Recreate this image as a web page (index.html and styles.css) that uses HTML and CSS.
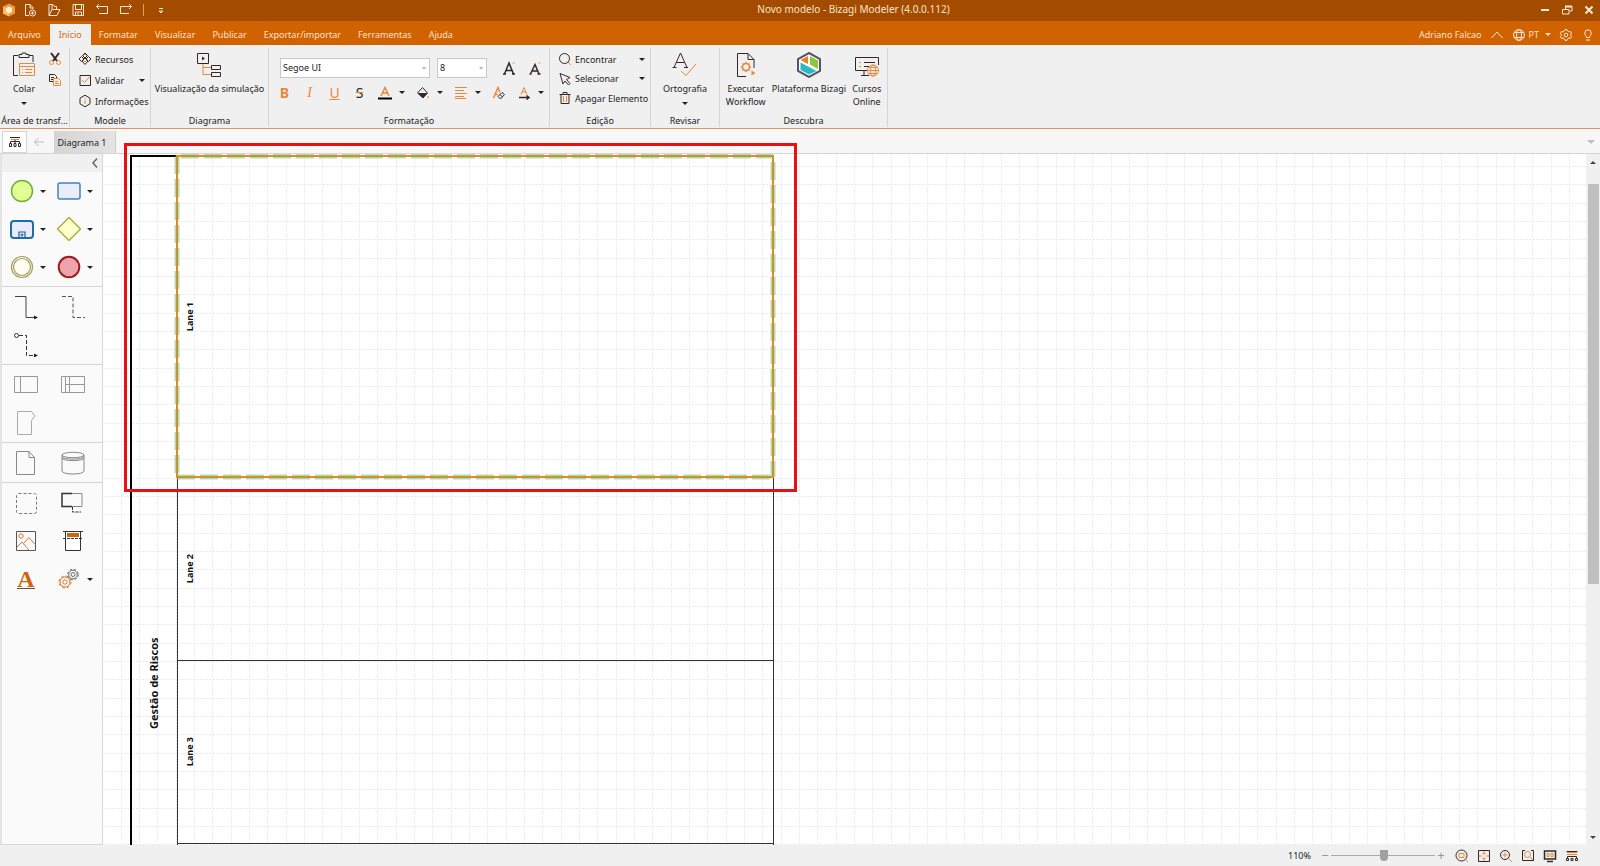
FILE: index.html
```
<!DOCTYPE html>
<html lang="pt">
<head>
  <meta charset="UTF-8" />
  <meta name="viewport" content="width=device-width, initial-scale=1.0"/>
  <title>Novo modelo - Bizagi Modeler (4.0.0.112)</title>
  <link rel="stylesheet" href="styles.css">
</head>
<body>
  <header class="title-bar">
    <div class="quick-access">
      <svg class="logo" width="14" height="14" viewBox="0 0 14 14"><path d="M7 0.5l6 3v7l-6 3-6-3v-7z" fill="#f59a3c"/><path d="M1 3.500l6 3.200v6.800l-6-3z" fill="#fbb569"/><path d="M7 3.500l3 1.600v4L7 10.600 4 9.100v-4z" fill="#fff2dd"/></svg>
      <button title="Novo"><svg width="14" height="14" viewBox="0 0 14 14"><path d="M6 12.500H2.500V1.500H7l3 3V6M7 1.500V5h3"/><circle cx="9.500" cy="10" r="3"/><path d="M9.500 8.500v3M8 10h3"/></svg></button>
      <button title="Abrir"><svg width="14" height="14" viewBox="0 0 14 14"><path d="M2 12.500V1.500h4l1.500 2h2V6M2 12.500L5 6.500h8l-3 6zM5 1.500v5"/></svg></button>
      <button title="Salvar"><svg width="14" height="14" viewBox="0 0 14 14"><path d="M2 1.500h10.500v11H2zM4.500 1.500v5h6v-5M4.500 12.500V9h6v3.500M7 10v2.500"/></svg></button>
      <button title="Desfazer"><svg width="14" height="14" viewBox="0 0 14 14"><path d="M4 1L1.500 3.500 4 6M1.500 3.500H12.500v7H4"/></svg></button>
      <button title="Refazer"><svg width="14" height="14" viewBox="0 0 14 14"><path d="M10 1l2.500 2.500L10 6M12.500 3.500H1.500v7H10"/></svg></button>
      <span class="divider"></span>
      <button title="Personalizar"><svg width="14" height="14" viewBox="0 0 14 14"><path d="M5 5.500h4M5.200 8h3.600L7 10z"/></svg></button>
    </div>
    <h1>Novo modelo - Bizagi Modeler (4.0.0.112)</h1>
    <div class="window-buttons">
      <button title="Minimizar"><svg width="12" height="12" viewBox="0 0 12 12"><path d="M2 6h8" stroke-width="2"/></svg></button>
      <button title="Restaurar"><svg width="12" height="12" viewBox="0 0 12 12"><path d="M4.500 5V2.500H11V7H8.500M1.500 5.500H8V10H1.500z"/><path d="M4 2.500h7" stroke-width="2"/></svg></button>
      <button title="Fechar"><svg width="12" height="12" viewBox="0 0 12 12"><path d="M2.500 2.500l7 7M9.500 2.500l-7 7" stroke-width="2"/></svg></button>
    </div>
  </header>

  <nav class="menu-bar">
    <button>Arquivo</button>
    <button class="active">Início</button>
    <button>Formatar</button>
    <button>Visualizar</button>
    <button>Publicar</button>
    <button>Exportar/importar</button>
    <button>Ferramentas</button>
    <button>Ajuda</button>
    <div class="account">
      <span>Adriano Falcao</span>
      <button title="Recolher"><svg width="14" height="12" viewBox="0 0 14 12"><path d="M1.500 9L7 3l5.500 6"/></svg></button>
      <button class="language"><svg width="14" height="12" viewBox="0 0 14 12"><circle cx="7" cy="6" r="5.400"/><ellipse cx="7" cy="6" rx="2.500" ry="5.400"/><path d="M2 3.500h10M2 8.500h10"/></svg>PT<i class="caret"></i></button>
      <button title="Opções"><svg width="14" height="12" viewBox="0 0 14 12"><path d="M5.500 2L6 .6h2L8.500 2l1.500.9 1.600-.4 1 1.700L11.500 6l1.100 1.500-1 1.700L10 9l-1.500 1-.5 1.400H6L5.500 10 4 9l-1.600.3-1-1.700L2.500 6 1.400 4.200l1-1.700L4 2.900z"/><circle cx="7" cy="6" r="1.800"/></svg></button>
      <button title="Dicas"><svg width="14" height="12" viewBox="0 0 14 12"><path d="M5.500 8.500C5.500 7 3.800 6.500 3.800 4a3.200 3.200 0 0 1 6.400 0c0 2.500-1.700 3-1.700 4.500zM5 11h4"/></svg></button>
    </div>
  </nav>

  <section class="ribbon">
    <div class="group group-clipboard">
      <div class="group-body">
        <button class="big">
          <svg width="26" height="26" viewBox="0 0 26 26"><path class="dark" d="M7 3.500H2.500v20H7M18 3.500h4V10M8 5.500V2.500h3V1h4v1.500h3v3z"/><path class="orange" d="M8.500 11.500h15v12h-15zM8.500 14.500h15M11 17.500h1M14 17.500h7M11 20.500h1M14 20.500h7"/></svg>
          Colar
          <i class="caret"></i>
        </button>
        <div class="stack">
          <button title="Recortar"><svg width="14" height="14" viewBox="0 0 14 14"><path class="dark" d="M3 1l6 8M11 1L5 9" stroke-width="2"/><circle class="orange" cx="3.500" cy="10.500" r="2"/><circle class="orange" cx="10.500" cy="10.500" r="2"/></svg></button>
          <button title="Copiar"><svg width="14" height="14" viewBox="0 0 14 14"><path class="dark" d="M5 8.500H1.500v-7h5l2 2V5M3 4.500h3M3 6.500h2"/><path class="orange" d="M5.500 5.500h5l2 2v5h-7zM7 8.500h3M7 10.500h4"/></svg></button>
        </div>
      </div>
      <h2>Área de transf...</h2>
    </div>

    <div class="group group-model">
      <div class="group-body rows">
        <button class="row"><svg width="14" height="14" viewBox="0 0 14 14"><path class="dark" d="M7 1l2.500 2.500L7 6 4.500 3.500zM3.500 4.500L6 7 3.500 9.500 1 7zM10.500 4.500L13 7l-2.500 2.500L8 7zM7 6l3 3-3 3.500L4 9z"/><path class="orange" d="M5 4l2-2 2 2M4.500 7.500L7 10l2.500-2.500"/></svg>Recursos</button>
        <button class="row"><svg width="14" height="14" viewBox="0 0 14 14"><path class="dark" d="M2 2.500h10.500v10H2z"/><path class="orange" d="M4 7l2.500 2.500 5-5.500"/></svg>Validar<i class="caret"></i></button>
        <button class="row"><svg width="14" height="14" viewBox="0 0 14 14"><path class="dark" d="M7 1.200l5 3v5.600l-5 3-5-3V4.200z"/><path class="orange" d="M7 6v4M7 4v1"/></svg>Informações</button>
      </div>
      <h2>Modele</h2>
    </div>

    <div class="group group-diagram">
      <div class="group-body">
        <button class="big">
          <svg width="26" height="26" viewBox="0 0 26 26"><path class="dark" d="M1.500 1.500h11v10h-11zM15.500 13.500h9v4h-9zM15.500 20.500h9v4h-9z"/><path d="M6 4.500v4l3-2z" fill="#33272a"/><path class="orange" d="M7 12v10.500h8M7 15.500h8"/></svg>
          Visualização da simulação
        </button>
      </div>
      <h2>Diagrama</h2>
    </div>

    <div class="group group-format">
      <div class="group-body format-body">
        <div class="format-line">
          <span class="select-box font-name"><select aria-label="Fonte"><option>Segoe UI</option></select></span>
          <span class="select-box font-size"><select aria-label="Tamanho"><option>8</option></select></span>
          <button title="Aumentar fonte"><svg width="16" height="16" viewBox="0 0 16 16"><path class="dark thick" d="M2.500 14L7 3l4.500 11M4 10.500h6M1 14h3M10 14h3"/><path class="orange" d="M10.500 3.500l1-1 1 1"/></svg></button>
          <button title="Diminuir fonte"><svg width="16" height="16" viewBox="0 0 16 16"><path class="dark thick" d="M3.500 14L8 4.500 12 14M5.500 11h5M2.500 14h2M10.500 14h3"/><path class="orange" d="M11.500 2.500l1 1 1-1"/></svg></button>
        </div>
        <div class="format-line">
          <button class="letter bold">B</button>
          <button class="letter italic">I</button>
          <button class="letter underline">U</button>
          <button class="letter strike">S</button>
          <button class="drop" title="Cor da fonte"><svg width="14" height="14" viewBox="0 0 14 14"><path class="orange thick" d="M3 10L7 1.500 11 10M4.500 7h5"/><path d="M0 12.500h14" stroke="#000" stroke-width="2"/></svg><i class="caret"></i></button>
          <button class="drop" title="Preenchimento"><svg width="14" height="14" viewBox="0 0 14 14"><path class="dark" d="M6.500 1.500l5 5.500L7 12 1.500 7z"/><path d="M1.500 7h10L7 12z" fill="#33272a"/><path class="orange" d="M12 10v2.500"/></svg><i class="caret"></i></button>
          <button class="drop" title="Alinhamento"><svg width="14" height="14" viewBox="0 0 14 14"><path class="orange" d="M1 1.500h12M1 4.500h9M1 7.500h12M1 10.500h9M1 12.500h11"/></svg><i class="caret"></i></button>
          <button title="Limpar formatação"><svg width="14" height="14" viewBox="0 0 14 14"><path class="orange thick" d="M1.500 12L6 1.500l2 5M3.500 8.500H6"/><path class="dark" d="M6 10.500l4-4 2.500 2-4 4.500zM8 8.500l2.500 2.500"/></svg></button>
          <button class="drop" title="Direção do texto"><svg width="14" height="14" viewBox="0 0 14 14"><path class="orange" d="M4 8.500l3-7 3 7M5 6h4"/><path class="dark thick" d="M2 11.500h9M9.500 9.500l2.500 2-2.500 2"/></svg><i class="caret"></i></button>
        </div>
      </div>
      <h2>Formatação</h2>
    </div>

    <div class="group group-edit">
      <div class="group-body rows">
        <button class="row"><svg width="14" height="14" viewBox="0 0 14 14"><circle class="dark" cx="6.500" cy="6.500" r="5"/><path class="orange" d="M10 10l3 3"/></svg>Encontrar<i class="caret"></i></button>
        <button class="row"><svg width="14" height="14" viewBox="0 0 14 14"><path class="dark" d="M2 1.500l10 4-3.500 2 3.500 4-1.500 1.500L7 9l-2 3z"/></svg>Selecionar<i class="caret"></i></button>
        <button class="row"><svg width="14" height="14" viewBox="0 0 14 14"><path class="dark" d="M1.500 3.500h11M5 3V1.500h4V3M3 4v8.500h8V4"/><path class="orange" d="M5.500 5v6M8.500 5v6"/></svg>Apagar Elemento</button>
      </div>
      <h2>Edição</h2>
    </div>

    <div class="group group-review">
      <div class="group-body">
        <button class="big">
          <svg width="26" height="26" viewBox="0 0 26 26"><path class="dark" d="M2 15.500L8.500 1 15 15.500M4.500 10.500h8M0.500 15.500h4M12 15.500h4"/><path class="orange" d="M9 19l5 4.500L24 12"/></svg>
          Ortografia
          <i class="caret"></i>
        </button>
      </div>
      <h2>Revisar</h2>
    </div>

    <div class="group group-discover">
      <div class="group-body">
        <button class="big">
          <svg width="26" height="26" viewBox="0 0 26 26"><path class="dark" d="M13 24.500H4.500v-23H15l6 6V16M15 1.500v6h6"/><circle class="orange thick" cx="13" cy="15" r="3.500"/><path class="orange thick" d="M13 10v2M13 18v2M8 15h2M16 15h2M9.500 11.500l1.200 1.200M15.300 17.300l1.200 1.200M16.500 11.500l-1.200 1.200M9.500 18.500l1.200-1.200"/><path d="M18.500 18.500v5l4-2.500z" fill="#e8883a"/></svg>
          <span>Executar<br>Workflow</span>
        </button>
        <button class="big">
          <svg width="26" height="26" viewBox="0 0 26 26"><path d="M13 1l11 6v12l-11 6-11-6V7z" fill="#fff" stroke="#556" stroke-width="2"/><path d="M12 4v8L4.500 8z" fill="#ee7f1a"/><path d="M14 4l8 4.500v8.500l-8-4.500z" fill="#8cc63e"/><path d="M4.500 10.500L20.500 19 13 22.500 4.500 18z" fill="#29b9c0"/></svg>
          Plataforma Bizagi
        </button>
        <button class="big">
          <svg width="26" height="26" viewBox="0 0 26 26"><path class="dark" d="M13 18.500H1.500v-13h23V13M7 23.500h8M10 19v4M10 10.500h11M10 14.500h5"/><path class="orange" d="M5 10.500h2M5 14.500h2"/><circle class="orange" cx="19" cy="18.500" r="5.500"/><ellipse class="orange" cx="19" cy="18.500" rx="2.500" ry="5.500"/><path class="orange" d="M13.500 18.500h11M14.500 15.500h9M14.500 21.500h9"/></svg>
          <span>Cursos<br>Online</span>
        </button>
      </div>
      <h2>Descubra</h2>
    </div>
  </section>

  <main class="workspace">
    <div class="tab-strip">
      <button class="tree-btn" title="Diagramas"><svg width="14" height="12" viewBox="0 0 14 12"><path class="dark" d="M2 1.500h10M1.500 7.500h2v3h-2zM6 7.500h2v3H6zM10.500 7.500h2v3h-2z"/><path class="orange" d="M3 3.500h8"/><path class="dark" d="M2.500 7V5.500h9V7M7 4v3"/></svg></button>
      <button class="back-btn" title="Voltar"><svg width="12" height="12" viewBox="0 0 12 12"><path d="M11 6H1.500M5.500 2l-4 4 4 4" stroke="#bbb"/></svg></button>
      <button class="diagram-tab">Diagrama 1</button>
      <i class="caret strip-caret"></i>
    </div>

    <div class="editor">
      <aside class="palette">
        <div class="palette-head"><button title="Recolher"><svg width="8" height="12" viewBox="0 0 8 12"><path d="M6 1.500L2 6l4 4.500" stroke="#666" stroke-width="1.500"/></svg></button></div>
        <div class="tools">
          <button class="with-caret"><svg width="24" height="24" viewBox="0 0 24 24"><circle cx="12" cy="12" r="10.500" fill="#e2ff96" stroke="#6fb03a" stroke-width="1.500"/></svg><i class="caret"></i></button>
          <button class="with-caret"><svg width="24" height="24" viewBox="0 0 24 24"><rect x="1" y="4" width="22" height="16" rx="2" fill="#eaecfd" stroke="#3f85b0" stroke-width="1.500"/></svg><i class="caret"></i></button>
          <button class="with-caret"><svg width="24" height="24" viewBox="0 0 24 24"><rect x="1" y="4" width="22" height="17" rx="3" fill="#eaecfd" stroke="#1c6ea8" stroke-width="2"/><path d="M9 20.500v-5.500h6v5.500M10.500 18h3M12 16.500v3" stroke="#1c5f95" stroke-width="1.200"/></svg><i class="caret"></i></button>
          <button class="with-caret"><svg width="24" height="24" viewBox="0 0 24 24"><path d="M12 0.500L23.500 12 12 23.500 0.500 12z" fill="#ffffcc" stroke="#aab042" stroke-width="1.500"/></svg><i class="caret"></i></button>
          <button class="with-caret"><svg width="24" height="24" viewBox="0 0 24 24"><circle cx="12" cy="12" r="10.500" fill="#fffdf0" stroke="#a59d5c" stroke-width="1.200"/><circle cx="12" cy="12" r="8.500" fill="#fffdf0" stroke="#a59d5c" stroke-width="1.200"/></svg><i class="caret"></i></button>
          <button class="with-caret"><svg width="24" height="24" viewBox="0 0 24 24"><circle cx="12" cy="12" r="10.300" fill="#eca5aa" stroke="#9c1c22" stroke-width="2"/></svg><i class="caret"></i></button>
        </div>
        <div class="tools">
          <button><svg width="24" height="24" viewBox="0 0 24 24"><path d="M1 1.500h11v21h10" stroke="#444"/><path d="M20 20.500l4 2-4 2z" fill="#222"/></svg></button>
          <button><svg width="24" height="24" viewBox="0 0 24 24"><path d="M1 1.500h11v21h12" stroke="#555" stroke-dasharray="4 2"/></svg></button>
          <button><svg width="24" height="24" viewBox="0 0 24 24"><circle cx="2.500" cy="2.500" r="2" stroke="#333"/><path d="M5 2.500h7.500v20H22" stroke="#333" stroke-dasharray="4 2"/><path d="M20 20.500l4 2-4 2z" fill="#222"/></svg></button>
        </div>
        <div class="tools">
          <button><svg width="24" height="24" viewBox="0 0 24 24"><path d="M.5 3.500h23v16H.5zM6.500 3.500v16" stroke="#999"/></svg></button>
          <button><svg width="24" height="24" viewBox="0 0 24 24"><path d="M.5 3.500h23v16H.5zM4.500 3.500v16M8.500 3.500v16M4.500 11.500h19" stroke="#999"/></svg></button>
          <button><svg width="24" height="24" viewBox="0 0 24 24"><path d="M3.500.5h14l3.500 4.500-3.500 4.500v14h-14z" stroke="#aaa"/></svg></button>
        </div>
        <div class="tools">
          <button><svg width="24" height="24" viewBox="0 0 24 24"><path d="M2.500.5H15l5.500 6v17h-18zM15 .5v6h5.500" stroke="#888"/></svg></button>
          <button><svg width="24" height="24" viewBox="0 0 24 24"><path d="M1 4v16c0 4 22 4 22 0V4M1 7c0 3.500 22 3.500 22 0M1 5.500c0 3.500 22 3.500 22 0" stroke="#888"/><ellipse cx="12" cy="4" rx="11" ry="2.700" stroke="#888"/></svg></button>
        </div>
        <div class="tools">
          <button><svg width="24" height="24" viewBox="0 0 24 24"><rect x="2.500" y="2.500" width="20" height="20" rx="2" stroke="#777" stroke-dasharray="3 2"/></svg></button>
          <button><svg width="24" height="24" viewBox="0 0 24 24"><path d="M11 2.500h10v13H11" stroke="#888"/><path d="M11 2.500H1v13h10" stroke="#333" stroke-width="1.500"/><path d="M11.500 16v5H20" stroke="#333" stroke-dasharray="3 1"/></svg></button>
          <button><svg width="24" height="24" viewBox="0 0 24 24"><path d="M2.500 2.500h19v19h-19z" stroke="#555"/><circle cx="7" cy="7" r="2.200" stroke="#d9762b"/><path d="M3 18l5-5 4.500 5.500M9.500 14.500L15 8.500l6 7M12.500 18.500l3 3" stroke="#d9762b"/></svg></button>
          <button><svg width="24" height="24" viewBox="0 0 24 24"><path d="M4.500 2.500h15v19h-15z" fill="#fff" stroke="#333"/><path d="M6 4h12v4H6z" fill="#cc6612"/><path d="M2 2.500h3M19 2.500h3M2 9.500h20" stroke="#333" stroke-dasharray="3 1"/></svg></button>
          <button class="text-tool">A</button>
          <button class="with-caret"><svg width="24" height="24" viewBox="0 0 24 24"><g stroke="#666"><circle cx="16" cy="7.500" r="4.300"/><circle cx="16" cy="7.500" r="5.300" stroke-dasharray="2.200 2"/><circle cx="16" cy="7.500" r="2"/></g><g stroke="#d9762b"><circle cx="8" cy="15" r="5" fill="#fafafa"/><circle cx="8" cy="15" r="6" stroke-dasharray="2.500 2.200"/><circle cx="8" cy="15" r="2.200"/></g></svg><i class="caret"></i></button>
        </div>
      </aside>

      <div class="canvas">
        <svg class="grid" width="100%" height="100%">
          <defs>
            <!-- three cells of the grid at 110% zoom -->
            <pattern id="gridCells" x="0" y="12" width="55" height="55" patternUnits="userSpaceOnUse">
              <path d="M18.500 0v55M36.500 0v55M54.500 0v55M0 .5h55M0 18.500h55M0 37.500h55" stroke="#ececec" stroke-dasharray="2 1"/>
            </pattern>
          </defs>
          <rect width="100%" height="100%" fill="url(#gridCells)"/>
        </svg>
        <div class="pool">
          <div class="pool-name">Gestão de Riscos</div>
          <div class="lanes">
            <div class="lane lane-tall"><span>Lane 1</span></div>
            <div class="lane"><span>Lane 2</span></div>
            <div class="lane"><span>Lane 3</span></div>
            <div class="lane"></div>
            <div class="lane"></div>
            <svg class="selection" width="602" height="327" viewBox="0 0 602 327">
              <rect x="3" y="3" width="596" height="321" stroke="#e8862a" stroke-width="2"/>
              <g stroke="#86b04a" stroke-opacity=".5" stroke-width="5" stroke-dasharray="18 5">
                <path d="M7 3h592M3 3v321M3 324h596M599 9v315"/>
              </g>
            </svg>
          </div>
        </div>
      </div>

      <div class="scrollbar">
        <i class="caret up"></i>
        <div class="scroll-thumb"></div>
        <i class="caret"></i>
      </div>
    </div>
    <div class="highlight"></div>
  </main>

  <footer class="status-bar">
    <label for="zoomRange">110%</label>
    <div class="zoom-control">
      <button title="Reduzir">−</button>
      <input type="range" id="zoomRange" min="10" max="210" value="112">
      <button title="Ampliar">+</button>
    </div>
    <div class="view-buttons">
      <button title="Zoom 100%"><svg width="14" height="14" viewBox="0 0 14 14"><circle class="dark" cx="6.500" cy="6.500" r="5.500"/><path class="orange" d="M4 4.500h5v4H4zM10.500 10.500L13 13"/></svg></button>
      <button title="Ajustar"><svg width="14" height="14" viewBox="0 0 14 14"><path class="dark" d="M1.500 1.500h11v11h-11z"/><path class="orange" d="M7 2v3M7 9v3M2 7h3M9 7h3M5.500 4L7 5.500 8.500 4M5.500 10L7 8.500 8.500 10"/></svg></button>
      <button title="Zoom"><svg width="14" height="14" viewBox="0 0 14 14"><circle class="dark" cx="6" cy="6" r="4.500"/><path class="orange" d="M6 3.500v5M3.500 6h5M9.500 9.500L13 13"/></svg></button>
      <button title="Zoom da seleção"><svg width="14" height="14" viewBox="0 0 14 14"><path class="dark" d="M4 1.500H1.500v10H12.500v-10H10"/><circle class="orange" cx="6.500" cy="5.500" r="3"/><path class="orange" d="M9 8l3 3"/></svg></button>
      <button title="Apresentação"><svg width="14" height="14" viewBox="0 0 14 14"><path class="dark thick" d="M1.500 2h11v8h-11zM4 12.500h6"/><path class="orange" d="M4 4.500h2v3H4zM8 4.500h2v3H8z"/></svg></button>
      <button title="Diagramas"><svg width="14" height="14" viewBox="0 0 14 14"><path class="orange" d="M2 3.500h10M2 5.500h10"/><path class="dark" d="M1.500 2.500h11M1.500 9.500h2v2h-2zM6 9.500h2v2H6zM10.500 9.500h2v2h-2zM2.500 9V7.500h9V9"/></svg></button>
    </div>
  </footer>
</body>
</html>
```
FILE: styles.css
```
* {
  box-sizing: border-box;
}

body {
  margin: 0;
  height: 100vh;
  display: flex;
  flex-direction: column;
  overflow: hidden;
  font-family: 'Segoe UI', 'Noto Sans', sans-serif;
  font-size: 9px;
  line-height: 13px;
  color: #222;
  background: #f0f0f0;
}

h1, h2 {
  margin: 0;
  font-weight: normal;
}

button {
  display: flex;
  align-items: center;
  justify-content: center;
  padding: 0;
  border: none;
  background: none;
  font: inherit;
  color: inherit;
  cursor: pointer;
}

svg {
  display: block;
  flex: none;
  fill: none;
}

.dark {
  stroke: #33272a;
}

.orange {
  stroke: #e8883a;
}

.thick {
  stroke-width: 1.5;
}

.caret {
  flex: none;
  border: 3px solid transparent;
  border-top-color: currentColor;
  border-bottom: none;
}

.caret.up {
  border-top: none;
  border-bottom: 3px solid currentColor;
}

/* title bar */
.title-bar {
  display: grid;
  grid-template-columns: 1fr auto 1fr;
  align-items: center;
  height: 21px;
  padding: 0 5px 2px 2px;
  background: #a34c00;
  color: #fde3cc;
}

.title-bar h1 {
  padding-left: 110px;
  font-size: 10px;
}

.title-bar svg,
.menu-bar svg {
  stroke: #fde8d6;
}

.title-bar .logo {
  stroke: none;
}

.quick-access,
.window-buttons {
  display: flex;
  align-items: center;
  gap: 10px;
}

.quick-access > .logo {
  margin-right: -3px;
}

.divider {
  width: 1px;
  height: 12px;
  background: #d9a06c;
}

.window-buttons {
  justify-content: flex-end;
}

/* menu */
.menu-bar {
  display: flex;
  align-items: flex-end;
  height: 24px;
  background: #d06200;
  color: #fde3cc;
}

.menu-bar > button {
  height: 21px;
  padding: 0 9px 0 8px;
}

.menu-bar > .active {
  padding: 0 9px;
  background: #f0f0f0;
  color: #d9691a;
}

.account {
  display: flex;
  align-items: center;
  gap: 8px;
  height: 21px;
  margin-left: auto;
  padding-right: 5px;
}

.language {
  gap: 3px;
}

.language .caret {
  margin-left: 3px;
}

/* ribbon */
.ribbon {
  display: flex;
  height: 84px;
  padding: 3px 0 1px;
  border-bottom: 1px solid #dc9560;
}

.group {
  display: flex;
  flex-direction: column;
  flex: none;
  border-right: 1px solid #d5d5d5;
}

.group h2 {
  font-size: 9px;
  text-align: center;
  white-space: nowrap;
}

.group-body {
  flex: 1;
  display: flex;
  justify-content: center;
  padding-top: 4px;
}

.group-clipboard { width: 70px; }
.group-model { width: 81px; }
.group-diagram { width: 118px; }
.group-format { width: 281px; }
.group-edit { width: 101px; }
.group-review { width: 69px; }
.group-discover { width: 168px; }

.big {
  flex-direction: column;
  justify-content: flex-start;
  gap: 4px;
  white-space: nowrap;
}

.big .caret {
  margin-top: 3px;
}

.group-clipboard .group-body {
  justify-content: flex-start;
  gap: 11px;
  padding-left: 11px;
}

.group-discover .group-body {
  gap: 6px;
}

.stack {
  display: flex;
  flex-direction: column;
  gap: 7px;
}

.rows {
  flex-direction: column;
  justify-content: space-between;
  padding: 4px 5px 6px 8px;
}

.group-edit .rows {
  padding-bottom: 9px;
}

.row {
  justify-content: flex-start;
  gap: 3px;
  white-space: nowrap;
}

.row .caret {
  margin-left: auto;
}

.format-body {
  flex-direction: column;
  justify-content: flex-start;
  gap: 6px;
  padding: 10px 0 0 3px;
}

.format-line {
  display: flex;
  align-items: center;
  height: 19px;
}

.format-line button {
  width: 25px;
  height: 19px;
}

.select-box {
  position: relative;
  height: 20px;
  margin: 0 0 0 8px;
}

.select-box::after {
  content: "";
  position: absolute;
  right: 4px;
  top: 9px;
  border: 2px solid transparent;
  border-top: 3px solid #b5b5b5;
  border-bottom: none;
}

.font-name {
  width: 150px;
}

.font-size {
  width: 50px;
  margin: 0 10px 0 7px;
}

.select-box select {
  appearance: none;
  width: 100%;
  height: 20px;
  padding: 0 2px;
  border: 1px solid #c8c8c8;
  border-radius: 0;
  background: #fff;
  font: inherit;
  color: #222;
}

.format-line .letter {
  font-size: 14px;
  color: #e8883a;
}

.format-line .bold { font-weight: bold; }
.format-line .italic { font-family: 'Liberation Serif', serif; font-style: italic; }
.format-line .underline { text-decoration: underline; }
.format-line .strike { color: #33272a; text-decoration: line-through #e8883a; }

.format-line .drop {
  width: 38px;
  gap: 7px;
}

/* workspace */
.workspace {
  position: relative;
  flex: 1;
  display: flex;
  flex-direction: column;
  min-height: 0;
}

.tab-strip {
  display: flex;
  align-items: stretch;
  height: 25px;
  padding: 2px 5px 0 2px;
  border-bottom: 1px solid #d5d5d5;
  background: #f7f7f7;
}

.tree-btn {
  width: 25px;
  border: 1px solid #d5d5d5;
  background: #fff;
}

.back-btn {
  width: 27px;
  padding-right: 3px;
}

.diagram-tab {
  width: 62px;
  padding-right: 5px;
  border-right: 1px solid #ccc;
  background: linear-gradient(to right, #d4d4d4, #e4e4e4);
}

.strip-caret {
  align-self: center;
  margin-left: auto;
  color: #c0c0c0;
  border-width: 4px;
}

.editor {
  flex: 1;
  display: flex;
  min-height: 0;
  background: #fff;
}

.palette {
  flex: none;
  width: 103px;
  border: 1px solid #d8d8d8;
  border-left: 2px solid #e4e4e4;
  border-top: none;
  background: #fafafa;
}

.palette-head {
  display: flex;
  justify-content: flex-end;
  height: 18px;
  padding-right: 3px;
  background: #f0f0f0;
}

.tools {
  display: grid;
  grid-template-columns: 47px 47px;
  grid-auto-rows: 38px;
  padding-left: 4px;
  border-bottom: 1px solid #d5d5d5;
}

.tools + .tools {
  padding-top: 1px;
}

.tools:last-child {
  border-bottom: none;
}

.tools button {
  justify-content: flex-start;
  padding-left: 8px;
}

.tools .with-caret {
  gap: 6px;
  padding-left: 4px;
}

.tools .text-tool {
  align-self: center;
  justify-content: center;
  width: 18px;
  height: 20px;
  margin-left: 11px;
  padding: 0;
  border-bottom: 1px solid #555;
  font: bold 24px/20px 'Liberation Serif', serif;
  color: #cc6612;
}

.canvas {
  position: relative;
  flex: 1;
  overflow: hidden;
}

.grid {
  position: absolute;
  inset: 0;
}

.pool {
  position: absolute;
  left: 27px;
  top: 1px;
  display: flex;
  border: 2px solid #000;
  border-right: 1px solid #333;
  font-weight: bold;
  color: #111;
}

.pool-name {
  display: flex;
  align-items: center;
  justify-content: center;
  width: 45px;
  padding-left: 3px;
  font-size: 11px;
  writing-mode: vertical-rl;
  transform: rotate(180deg);
}

.lanes {
  position: relative;
  width: 596px;
  border-left: 1px solid #333;
}

.lane {
  display: flex;
  align-items: center;
  height: 183px;
  padding-left: 5px;
  border-bottom: 1px solid #333;
}

.lane-tall {
  height: 321px;
}

.lane span {
  writing-mode: vertical-rl;
  transform: rotate(180deg);
}

.selection {
  position: absolute;
  left: -4px;
  top: -4px;
}

.highlight {
  position: absolute;
  left: 124px;
  top: 14px;
  width: 673px;
  height: 349px;
  border: 3px solid #e81010;
  pointer-events: none;
}

.scrollbar {
  flex: none;
  display: flex;
  flex-direction: column;
  align-items: center;
  width: 14px;
  padding: 7px 0 6px;
  background: #f0f0f0;
  color: #444;
}

.scroll-thumb {
  width: 11px;
  height: 59%;
  margin: 20px 0 auto;
  background: #bfbfbf;
}

/* status bar */
.status-bar {
  display: flex;
  align-items: center;
  justify-content: flex-end;
  gap: 10px;
  height: 21px;
  padding-right: 21px;
  background: #f0f0f0;
}

.zoom-control {
  display: flex;
  align-items: center;
  gap: 2px;
  color: #999;
}

.zoom-control button {
  width: 8px;
  font-size: 13px;
}

.zoom-control input {
  appearance: none;
  width: 104px;
  height: 12px;
  margin: 0;
  background: linear-gradient(#aaa, #aaa) center / 100% 1px no-repeat;
}

.zoom-control input::-webkit-slider-thumb {
  appearance: none;
  width: 8px;
  height: 11px;
  border-radius: 0 0 4px 4px;
  background: #a0a0a0;
}

.view-buttons {
  display: flex;
  gap: 8px;
}
```
